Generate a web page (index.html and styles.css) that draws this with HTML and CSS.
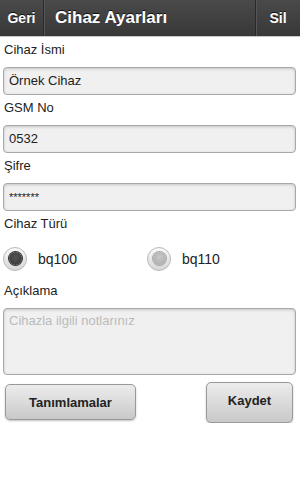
FILE: index.html
```html
<!DOCTYPE html>
<html lang="tr">
<head>
<meta charset="utf-8">
<title>Cihaz Ayarları</title>
<link rel="stylesheet" href="styles.css">
</head>
<body>
<header class="topbar">
  <div class="tb-btn tb-left">Geri</div>
  <div class="tb-title">Cihaz Ayarları</div>
  <div class="tb-btn tb-right">Sil</div>
</header>
<main class="form">
  <div class="label">Cihaz İsmi</div>
  <div class="field">Örnek Cihaz</div>
  <div class="label">GSM No</div>
  <div class="field">0532</div>
  <div class="label">Şifre</div>
  <div class="field pw">*******</div>
  <div class="label">Cihaz Türü</div>
  <div class="radios">
    <div class="radio"><span class="dot on"></span><span class="rlabel">bq100</span></div>
    <div class="radio"><span class="dot"></span><span class="rlabel">bq110</span></div>
  </div>
  <div class="label">Açıklama</div>
  <div class="field area">Cihazla ilgili notlarınız</div>
  <div class="actions">
    <div class="btn btn-def">Tanımlamalar</div>
    <div class="btn btn-save">Kaydet</div>
  </div>
</main>
</body>
</html>
```
FILE: styles.css
```css
html, body {
  margin: 0;
  padding: 0;
  background: #fff;
}
body {
  width: 300px;
  font-family: "Liberation Sans", Arial, sans-serif;
  color: #222;
  font-size: 13px;
}
.topbar {
  display: flex;
  height: 36px;
  background: linear-gradient(#4a4a4a, #383838);
  border-bottom: 1px solid #c8c8c8;
  color: #fff;
  font-weight: bold;
  text-shadow: 0 -1px 0 #111;
}
.tb-btn {
  display: flex;
  align-items: center;
  justify-content: center;
  font-size: 14px;
}
.tb-left {
  width: 43px;
  border-right: 1px solid #2a2a2a;
  box-shadow: 1px 0 0 #555;
}
.tb-title {
  flex: 1;
  display: flex;
  align-items: center;
  padding-left: 11px;
  font-size: 17px;
}
.tb-right {
  width: 44px;
  border-left: 1px solid #2a2a2a;
  box-shadow: inset 1px 0 0 #555;
}
.form {
  padding: 0 4px 0 3px;
}
.label {
  line-height: 18px;
  padding: 4px 0 8px 1px;
  color: #222;
}
.field {
  height: 26px;
  line-height: 26px;
  border: 1px solid #a8a8a8;
  border-radius: 4px;
  background: #f0f0f0;
  box-shadow: inset 0 1px 3px rgba(0,0,0,0.18);
  padding: 0 5px;
  color: #222;
}
.field.pw {
  font-size: 11px;
}
.field.area {
  height: 63px;
  line-height: 20px;
  padding-top: 2px;
  color: #bbb;
}
.radios {
  display: flex;
  height: 37px;
  align-items: center;
  padding-bottom: 2px;
  box-sizing: border-box;
}
.radio {
  display: flex;
  align-items: center;
  width: 144px;
}
.dot {
  position: relative;
  width: 24px;
  height: 24px;
  border-radius: 50%;
  border: 1px solid #b8b8b8;
  background: linear-gradient(#fafafa, #d6d6d6);
  box-sizing: border-box;
}
.dot::after {
  content: "";
  position: absolute;
  left: 4.5px;
  top: 4.5px;
  width: 13px;
  height: 13px;
  border-radius: 50%;
  background: radial-gradient(circle at 50% 40%, #c8c8c8, #a8a8a8);
  box-shadow: 0 0 0 1px #aaa;
}
.dot.on::after {
  background: radial-gradient(circle at 50% 40%, #555, #333);
  box-shadow: 0 0 0 1px #333;
}
.rlabel {
  margin-left: 11px;
  font-size: 14px;
}
.actions {
  display: flex;
  justify-content: space-between;
  align-items: flex-start;
  padding: 7px 3px 0 2px;
}
.btn {
  display: flex;
  align-items: center;
  justify-content: center;
  font-weight: bold;
  font-size: 13px;
  color: #222;
  border: 1px solid #999;
  border-radius: 5px;
  background: linear-gradient(#ececec, #c9c9c9);
  box-shadow: 0 1px 2px rgba(0,0,0,0.25);
  box-sizing: border-box;
}
.btn-def {
  width: 131px;
  height: 36px;
  margin-top: 2px;
}
.btn-save {
  width: 87px;
  height: 41px;
  padding-bottom: 4px;
}
```
